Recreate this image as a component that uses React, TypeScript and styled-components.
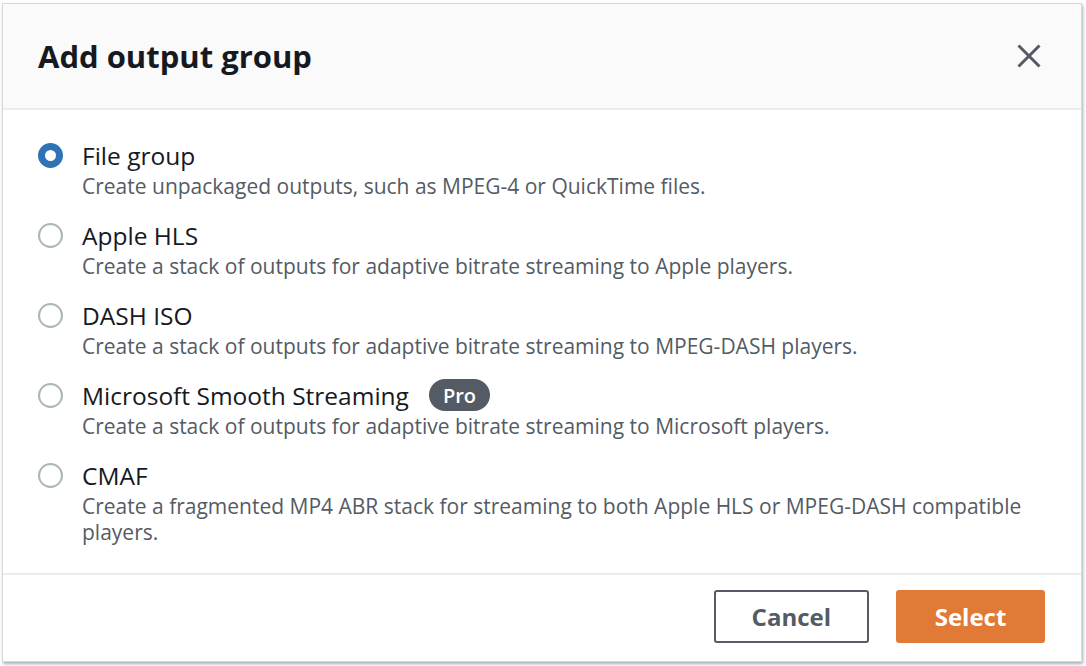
import React, { useState } from 'react';
import styled, { createGlobalStyle } from 'styled-components';

const GlobalStyle = createGlobalStyle`
  html, body {
    margin: 0;
    padding: 0;
    background: #ffffff;
  }
  body {
    font-family: "Open Sans", Roboto, sans-serif;
    color: #16191f;
  }
`;

const Page = styled.div`
  padding: 3px 4px 4px 2px;
`;

const Modal = styled.div`
  display: flex;
  flex-direction: column;
  width: 1080px;
  height: 659px;
  box-sizing: border-box;
  background: #ffffff;
  border: 1px solid #d5dbdb;
  box-shadow: 1px 2px 3px rgba(0, 28, 36, 0.35);
`;

const Header = styled.div`
  display: flex;
  align-items: center;
  justify-content: space-between;
  height: 104px;
  padding: 0 36px 0 35px;
  background: #fafafa;
  border-bottom: 2px solid #eaeded;
`;

const Title = styled.h2`
  margin: 0;
  font-size: 31px;
  font-weight: 700;
  color: #16191f;
`;

const CloseButton = styled.button`
  display: flex;
  align-items: center;
  justify-content: center;
  width: 32px;
  height: 32px;
  padding: 0;
  border: none;
  background: transparent;
  cursor: pointer;
`;

const Body = styled.div`
  flex: 1;
  display: flex;
  flex-direction: column;
  gap: 20px;
  padding: 29px 36px 0 35px;
`;

const Option = styled.label`
  display: grid;
  grid-template-columns: 25px 1fr;
  column-gap: 19px;
  cursor: pointer;
`;

const Radio = styled.span<{ $checked: boolean }>`
  width: 25px;
  height: 25px;
  margin-top: 4px;
  box-sizing: border-box;
  border-radius: 50%;
  background: #ffffff;
  border: ${(p) => (p.$checked ? '7.5px solid #2f73b7' : '2px solid #aab7b8')};
`;

const OptionText = styled.div`
  display: flex;
  flex-direction: column;
`;

const LabelRow = styled.div`
  display: flex;
  align-items: center;
  gap: 20px;
  height: 32px;
`;

const Label = styled.span`
  font-size: 24.5px;
  color: #16191f;
`;

const Badge = styled.span`
  display: inline-flex;
  align-items: center;
  justify-content: center;
  height: 32px;
  padding: 0 14px;
  border-radius: 16px;
  background: #545b64;
  color: #ffffff;
  font-size: 20px;
  font-weight: 600;
`;

const Description = styled.div`
  margin-top: 2px;
  font-size: 21px;
  line-height: 26px;
  color: #545b64;
`;

const Footer = styled.div`
  display: flex;
  justify-content: flex-end;
  align-items: center;
  gap: 27px;
  height: 88px;
  padding: 0 36px 3px;
  box-sizing: border-box;
  border-top: 2px solid #eaeded;
`;

const Button = styled.button<{ $primary?: boolean }>`
  height: 53px;
  padding: 0 36px;
  min-width: ${(p) => (p.$primary ? '149px' : '155px')};
  box-sizing: border-box;
  border-radius: 3px;
  font-family: "Open Sans", Roboto, sans-serif;
  font-size: 24px;
  font-weight: 700;
  cursor: pointer;
  border: 2px solid ${(p) => (p.$primary ? '#e07a36' : '#545b64')};
  background: ${(p) => (p.$primary ? '#e07a36' : '#ffffff')};
  color: ${(p) => (p.$primary ? '#ffffff' : '#545b64')};
`;

const options = [
  {
    id: 'file',
    label: 'File group',
    description: 'Create unpackaged outputs, such as MPEG-4 or QuickTime files.',
  },
  {
    id: 'hls',
    label: 'Apple HLS',
    description: 'Create a stack of outputs for adaptive bitrate streaming to Apple players.',
  },
  {
    id: 'dash',
    label: 'DASH ISO',
    description: 'Create a stack of outputs for adaptive bitrate streaming to MPEG-DASH players.',
  },
  {
    id: 'mss',
    label: 'Microsoft Smooth Streaming',
    badge: 'Pro',
    description: 'Create a stack of outputs for adaptive bitrate streaming to Microsoft players.',
  },
  {
    id: 'cmaf',
    label: 'CMAF',
    description:
      'Create a fragmented MP4 ABR stack for streaming to both Apple HLS or MPEG-DASH compatible players.',
  },
];

export default function App() {
  const [selected, setSelected] = useState('file');

  return (
    <Page>
      <GlobalStyle />
      <Modal>
        <Header>
          <Title>Add output group</Title>
          <CloseButton aria-label="Close">
            <svg width="24" height="24" viewBox="0 0 24 24">
              <path d="M1.5 1.5 L22.5 22.5 M22.5 1.5 L1.5 22.5" stroke="#545b64" strokeWidth="3" fill="none" />
            </svg>
          </CloseButton>
        </Header>
        <Body>
          {options.map((o) => (
            <Option key={o.id} onClick={() => setSelected(o.id)}>
              <Radio $checked={selected === o.id} />
              <OptionText>
                <LabelRow>
                  <Label>{o.label}</Label>
                  {o.badge && <Badge>{o.badge}</Badge>}
                </LabelRow>
                <Description>{o.description}</Description>
              </OptionText>
            </Option>
          ))}
        </Body>
        <Footer>
          <Button>Cancel</Button>
          <Button $primary>Select</Button>
        </Footer>
      </Modal>
    </Page>
  );
}
